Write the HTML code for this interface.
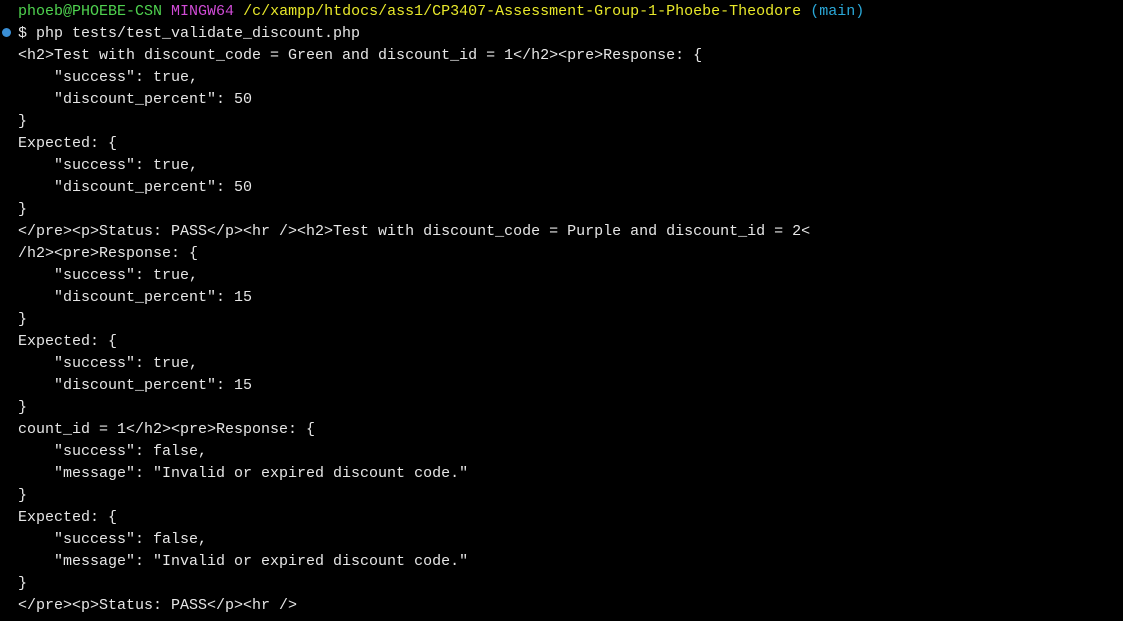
<!DOCTYPE html>
<html><head><meta charset="utf-8"><style>
html,body{margin:0;padding:0;background:#000;width:1123px;height:621px;overflow:hidden}
pre{margin:0;position:absolute;left:18px;top:1px;font-family:"Liberation Mono",monospace;font-size:15px;line-height:22px;color:#e6e6e6;white-space:pre}
.g{color:#4fd34f}.m{color:#d04bd6}.y{color:#e8e82a}.c{color:#2aa8d8}
.dot{position:absolute;left:2px;top:28px;width:9px;height:9px;border-radius:50%;background:#3a8fd6}
</style></head><body>
<div class="dot"></div>
<pre><span class="g">phoeb@PHOEBE-CSN</span> <span class="m">MINGW64</span> <span class="y">/c/xampp/htdocs/ass1/CP3407-Assessment-Group-1-Phoebe-Theodore</span> <span class="c">(main)</span>
$ php tests/test_validate_discount.php
&lt;h2&gt;Test with discount_code = Green and discount_id = 1&lt;/h2&gt;&lt;pre&gt;Response: {
    "success": true,
    "discount_percent": 50
}
Expected: {
    "success": true,
    "discount_percent": 50
}
&lt;/pre&gt;&lt;p&gt;Status: PASS&lt;/p&gt;&lt;hr /&gt;&lt;h2&gt;Test with discount_code = Purple and discount_id = 2&lt;
/h2&gt;&lt;pre&gt;Response: {
    "success": true,
    "discount_percent": 15
}
Expected: {
    "success": true,
    "discount_percent": 15
}
count_id = 1&lt;/h2&gt;&lt;pre&gt;Response: {
    "success": false,
    "message": "Invalid or expired discount code."
}
Expected: {
    "success": false,
    "message": "Invalid or expired discount code."
}
&lt;/pre&gt;&lt;p&gt;Status: PASS&lt;/p&gt;&lt;hr /&gt;</pre>
</body></html>
